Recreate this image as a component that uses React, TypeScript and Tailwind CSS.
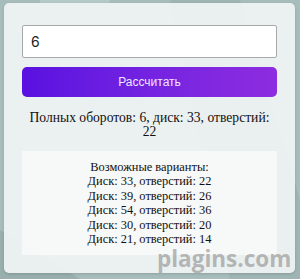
import React from "react"

const variants = [
  [33, 22],
  [39, 26],
  [54, 36],
  [30, 20],
  [21, 14],
]

export default function App() {
  return (
    <div className="relative w-[300px] h-[279px] overflow-hidden bg-[#a7bdbc]">
      {/* background shapes */}
      <svg className="absolute inset-0" width="300" height="279" viewBox="0 0 300 279">
        <polygon points="40,0 110,0 60,279 0,279" fill="#b5c9c8" />
        <polygon points="170,0 240,0 300,200 300,279 230,279" fill="#9fb5b4" />
        <polygon points="0,230 80,279 0,279" fill="#98afae" />
      </svg>

      <div className="relative flex flex-col px-[18px] pt-[22px] mx-[4px] mt-[3px] h-[270px] w-[291px] rounded-[5px] bg-[#eef2f2]/95 shadow-[0_1px_3px_rgba(0,0,0,0.15)]">
        <input
          defaultValue="6"
          className="h-[33px] w-full border border-[#a9a9a9] rounded-[2px] bg-white px-[8px] text-[14px] text-[#222] outline-none"
          style={{ fontFamily: "Inter, 'Noto Sans', sans-serif" }}
        />
        <button
          className="mt-[9px] h-[30px] w-full rounded-[5px] bg-gradient-to-r from-[#5a10e0] to-[#8e2ce0] text-[12px] text-[#efe6ff]"
          style={{ fontFamily: "'Liberation Sans', Arial, sans-serif" }}
        >
          Рассчитать
        </button>

        <div style={{ fontFamily: "'Liberation Serif', serif" }} className="text-[#111]">
          <p className="mt-[14px] text-center text-[13.6px] leading-[14px]">
            Полных оборотов: 6, диск: 33, отверстий: 22
          </p>
          <div className="mt-[12px] h-[104px] bg-[#f7f8f8] pt-[9px] text-center text-[12.4px] leading-[14.4px]">
            <div>Возможные варианты:</div>
            {variants.map(([d, h]) => (
              <div key={d}>
                Диск: {d}, отверстий: {h}
              </div>
            ))}
          </div>
        </div>
      </div>

      <div
        className="absolute left-[157px] top-[248px] text-[22.5px] leading-[22px] font-bold text-[#9a9a9a]/70"
        style={{ fontFamily: "'Open Sans', sans-serif" }}
      >
        plagins.com
      </div>
    </div>
  )
}
